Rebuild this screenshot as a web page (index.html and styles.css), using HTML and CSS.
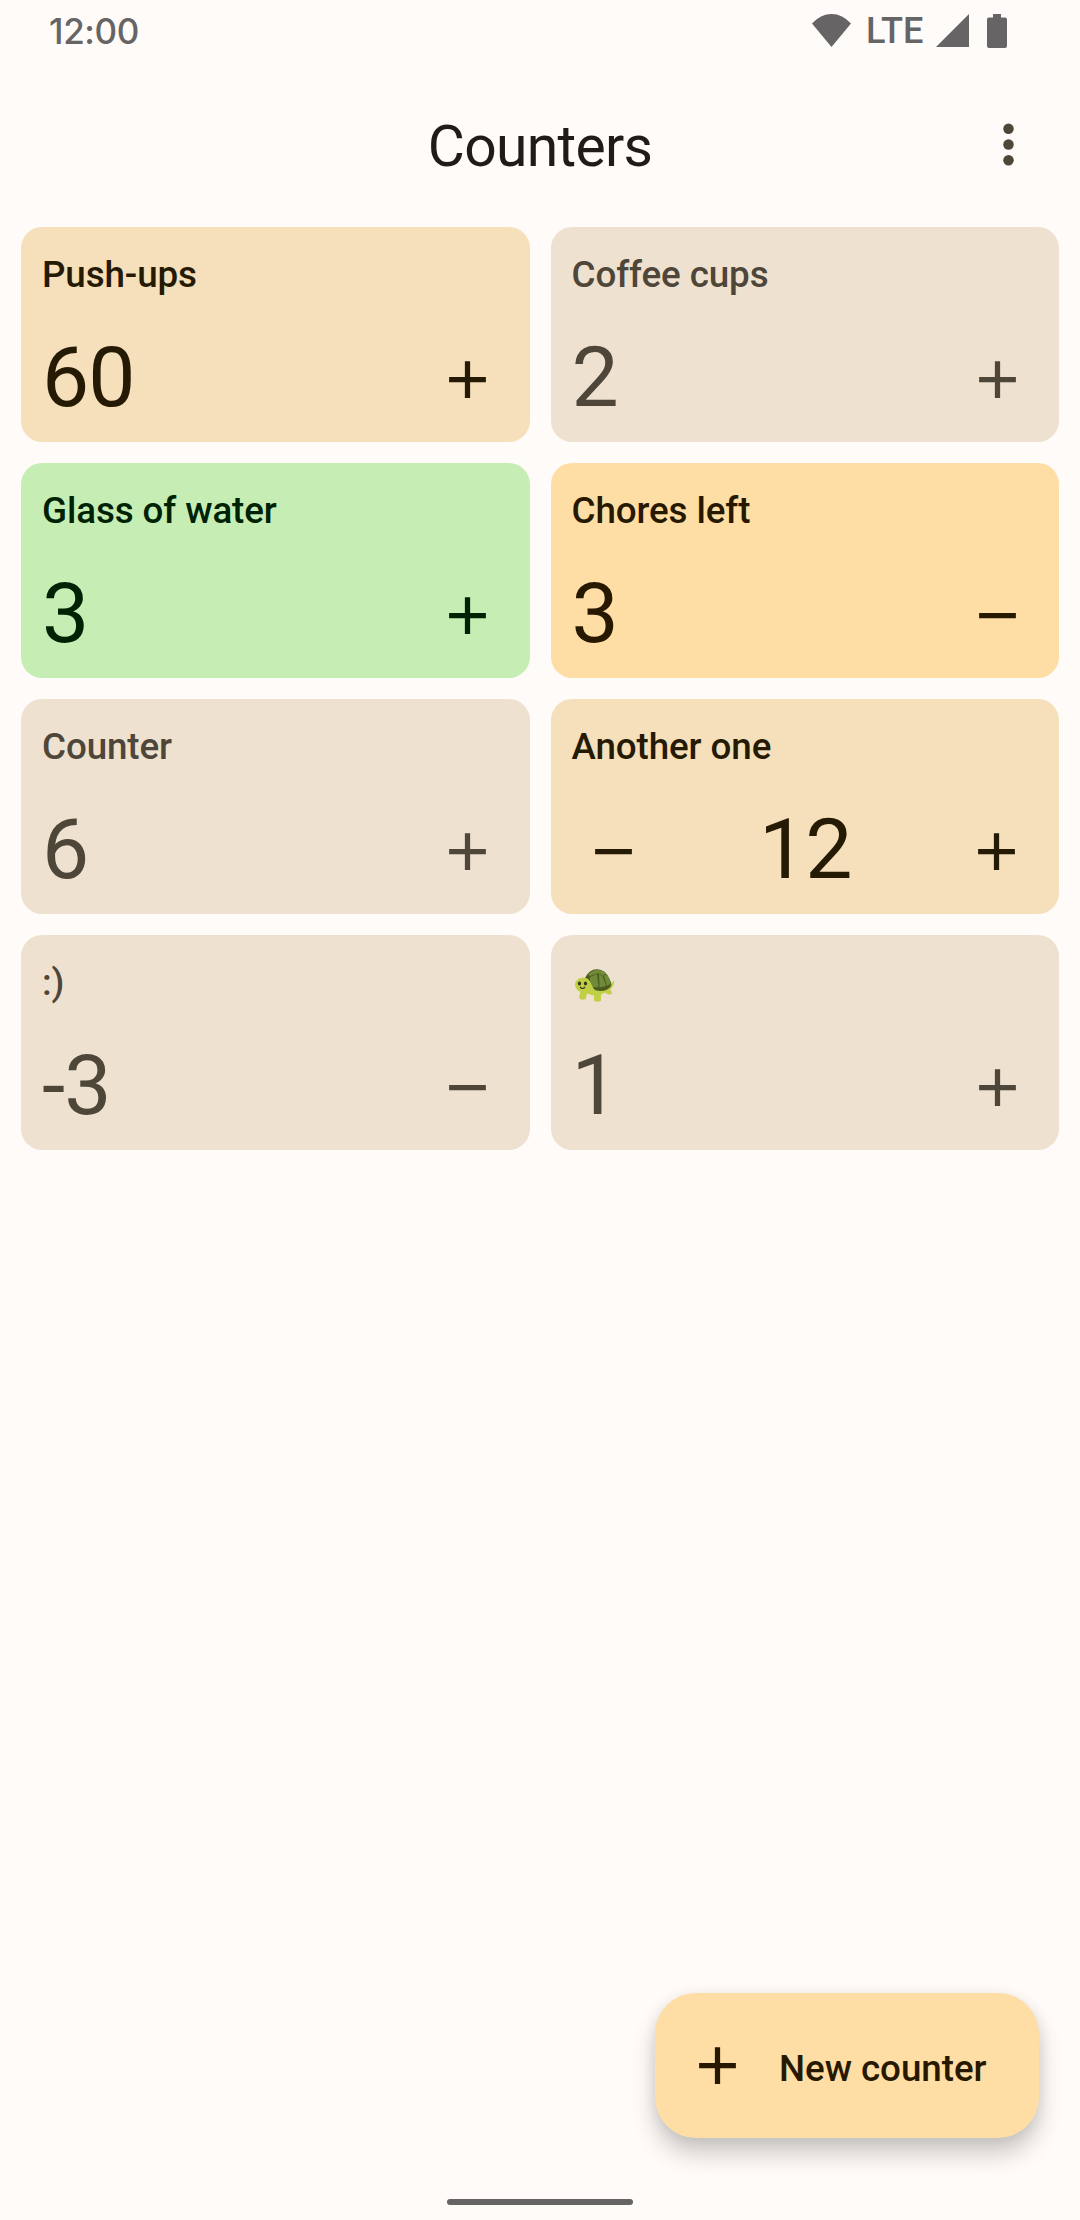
FILE: index.html
```html
<!DOCTYPE html>
<html lang="en">
<head>
<meta charset="utf-8">
<title>Counters</title>
<link rel="stylesheet" href="styles.css">
</head>
<body>
<svg class="defs" width="0" height="0" aria-hidden="true">
  <symbol id="add" viewBox="0 0 24 24"><path d="M19 13h-6v6h-2v-6H5v-2h6V5h2v6h6z"/></symbol>
  <symbol id="remove" viewBox="0 0 24 24"><path d="M19 13H5v-2h14z"/></symbol>
</svg>
<div class="screen">
  <header class="status">
    <span class="clock">12:00</span>
    <div class="indicators">
      <svg class="wifi" viewBox="0 0 39 33"><path d="M0 9.500Q8.500 0 19.500 0T39 9.500L19.500 33z"/></svg>
      <span class="network">LTE</span>
      <svg class="signal" viewBox="0 0 33 33"><path d="M33 0v33H0z"/></svg>
      <svg class="battery" viewBox="0 0 20 34"><path d="M6 0h8v3.500h4a2 2 0 0 1 2 2V32a2 2 0 0 1-2 2H2a2 2 0 0 1-2-2V5.500a2 2 0 0 1 2-2h4z"/></svg>
    </div>
  </header>
  <div class="appbar">
    <h1 class="title">Counters</h1>
    <button class="more" aria-label="More options"><svg class="icon" viewBox="0 0 24 24"><circle cx="12" cy="6" r="2"/><circle cx="12" cy="12" r="2"/><circle cx="12" cy="18" r="2"/></svg></button>
  </div>
  <main class="grid">
    <section class="card secondary"><h2 class="name">Push-ups</h2><div class="row"><span class="value">60</span><button class="step" aria-label="Increase"><svg class="icon"><use href="#add"/></svg></button></div></section>
    <section class="card"><h2 class="name">Coffee cups</h2><div class="row"><span class="value">2</span><button class="step" aria-label="Increase"><svg class="icon"><use href="#add"/></svg></button></div></section>
    <section class="card green"><h2 class="name">Glass of water</h2><div class="row"><span class="value">3</span><button class="step" aria-label="Increase"><svg class="icon"><use href="#add"/></svg></button></div></section>
    <section class="card primary"><h2 class="name">Chores left</h2><div class="row"><span class="value">3</span><button class="step" aria-label="Decrease"><svg class="icon"><use href="#remove"/></svg></button></div></section>
    <section class="card"><h2 class="name">Counter</h2><div class="row"><span class="value">6</span><button class="step" aria-label="Increase"><svg class="icon"><use href="#add"/></svg></button></div></section>
    <section class="card secondary"><h2 class="name">Another one</h2><div class="row both"><button class="step" aria-label="Decrease"><svg class="icon"><use href="#remove"/></svg></button><span class="value">12</span><button class="step" aria-label="Increase"><svg class="icon"><use href="#add"/></svg></button></div></section>
    <section class="card"><h2 class="name">:)</h2><div class="row"><span class="value">-3</span><button class="step" aria-label="Decrease"><svg class="icon"><use href="#remove"/></svg></button></div></section>
    <section class="card"><h2 class="name"><svg class="turtle" viewBox="0 0 40 33" role="img" aria-label="Turtle">
      <path fill="#bfd045" d="M33 17q4-2 6-6 1 5-4 10l2 2q0 3-4 2.500l-3-2-4 2V31q0 1.500-3.500 1.500T19 31v-5l-7-2-1 5.500q-1 1.500-4 1T4 28.500L6 21z"/>
      <path fill="#4c5a20" d="M10 9Q14 .5 22 .3T35 11q2 4 1 6-3 5-11 5-7-1-10-3z"/>
      <path fill="#6f8b38" d="M13 5.500Q17 1 22 1q6-.2 9 3l-3 3-5-3-8 3zM15 8l7-3 1.500 13Q18 19 15 17zM24 5l4 3 3 9-6.500 1.500zM29 7l3-2q3 4 3.500 10L32 17z"/>
      <path fill="#bfd045" d="M8 8.500q6 0 8 6 2 5 5 8l-2 4-11-3Q0 22 0 15.500 1 9 8 8.500z"/>
      <ellipse fill="#34351c" cx="4.500" cy="14.500" rx="1.600" ry="2"/><ellipse fill="#34351c" cx="10.500" cy="14.500" rx="1.600" ry="2"/>
      <path d="M5 18q2.500 3 5 0" fill="none" stroke="#34351c" stroke-width="1.200"/>
    </svg></h2><div class="row"><span class="value">1</span><button class="step" aria-label="Increase"><svg class="icon"><use href="#add"/></svg></button></div></section>
  </main>
  <footer class="bottom">
    <button class="fab"><svg class="icon"><use href="#add"/></svg><span class="label">New counter</span></button>
    <div class="handle"></div>
  </footer>
</div>
</body>
</html>
```
FILE: styles.css
```css
* { box-sizing: border-box; }
body { margin: 0; background: #fffbf8; font-family: Roboto, "Liberation Sans", sans-serif; color: #1f1b16; }
.defs { display: block; }
.screen { width: 1080px; height: 2220px; display: flex; flex-direction: column; }
button { border: 0; padding: 0; background: none; color: inherit; font: inherit; }
svg { display: block; fill: currentColor; }
.icon { width: 63px; height: 63px; }

.status { height: 63px; padding: 0 73px 0 49px; display: flex; justify-content: space-between; align-items: flex-start; color: #666465; font-family: Inter, Roboto, sans-serif; font-weight: 500; font-size: 35px; line-height: 62px; }
.clock { letter-spacing: -0.4px; }
.indicators { display: flex; align-items: flex-start; }
.wifi { width: 39px; height: 33px; margin-top: 14px; }
.network { margin-left: 15px; width: 70px; font-family: Roboto, sans-serif; font-size: 36px; line-height: 63px; }
.signal { width: 33px; height: 33px; margin-top: 14px; margin-right: 18px; }
.battery { width: 20px; height: 34px; margin-top: 14px; }

.appbar { height: 164px; padding: 0 9px; display: grid; grid-template-columns: 126px 1fr 126px; align-items: center; }
.title { grid-column: 2; margin: 4px 0 0; text-align: center; font-size: 57px; font-weight: 400; line-height: 74px; letter-spacing: -0.7px; }
.more { width: 126px; height: 126px; margin-bottom: 2px; display: grid; place-items: center; color: #4e4639; }

.grid { padding: 0 21px; display: grid; grid-template-columns: 1fr 1fr; gap: 21px; }
.card { height: 215px; border-radius: 21px; background: #eee1d0; color: #4e4639; display: flex; flex-direction: column; justify-content: space-between; }
.secondary { background: #f6dfbb; color: #251a04; }
.primary { background: #ffdea6; color: #271900; }
.green { background: #c6eeb4; color: #002204; }
.name { margin: 21px 21px 0; height: 53px; line-height: 53px; font-size: 36.75px; font-weight: 500; letter-spacing: -0.1px; }
.turtle { width: 40px; height: 33px; margin: 13px 0 0 3px; }
.row { height: 126px; display: flex; justify-content: space-between; align-items: center; padding-left: 21px; margin-right: -1px; }
.both { padding-left: 0; }
.value { font-size: 84px; line-height: 105px; margin-top: -3px; letter-spacing: -1px; }
.step { width: 126px; height: 126px; display: grid; place-items: center; }

.bottom { margin-top: auto; display: flex; flex-direction: column; }
.fab { align-self: flex-end; margin-right: 41px; width: 384px; height: 145px; border-radius: 41px; background: #ffdea6; color: #271900; display: flex; align-items: center; padding-left: 31px; box-shadow: 0 16px 24px rgba(0,0,0,.20), 0 2px 14px rgba(0,0,0,.08); }
.label { margin: 5px 0 0 30px; font-size: 36.75px; font-weight: 500; letter-spacing: -0.05px; }
.handle { width: 186px; height: 6px; margin: 61px auto 15px; border-radius: 3px; background: #666465; }
```
